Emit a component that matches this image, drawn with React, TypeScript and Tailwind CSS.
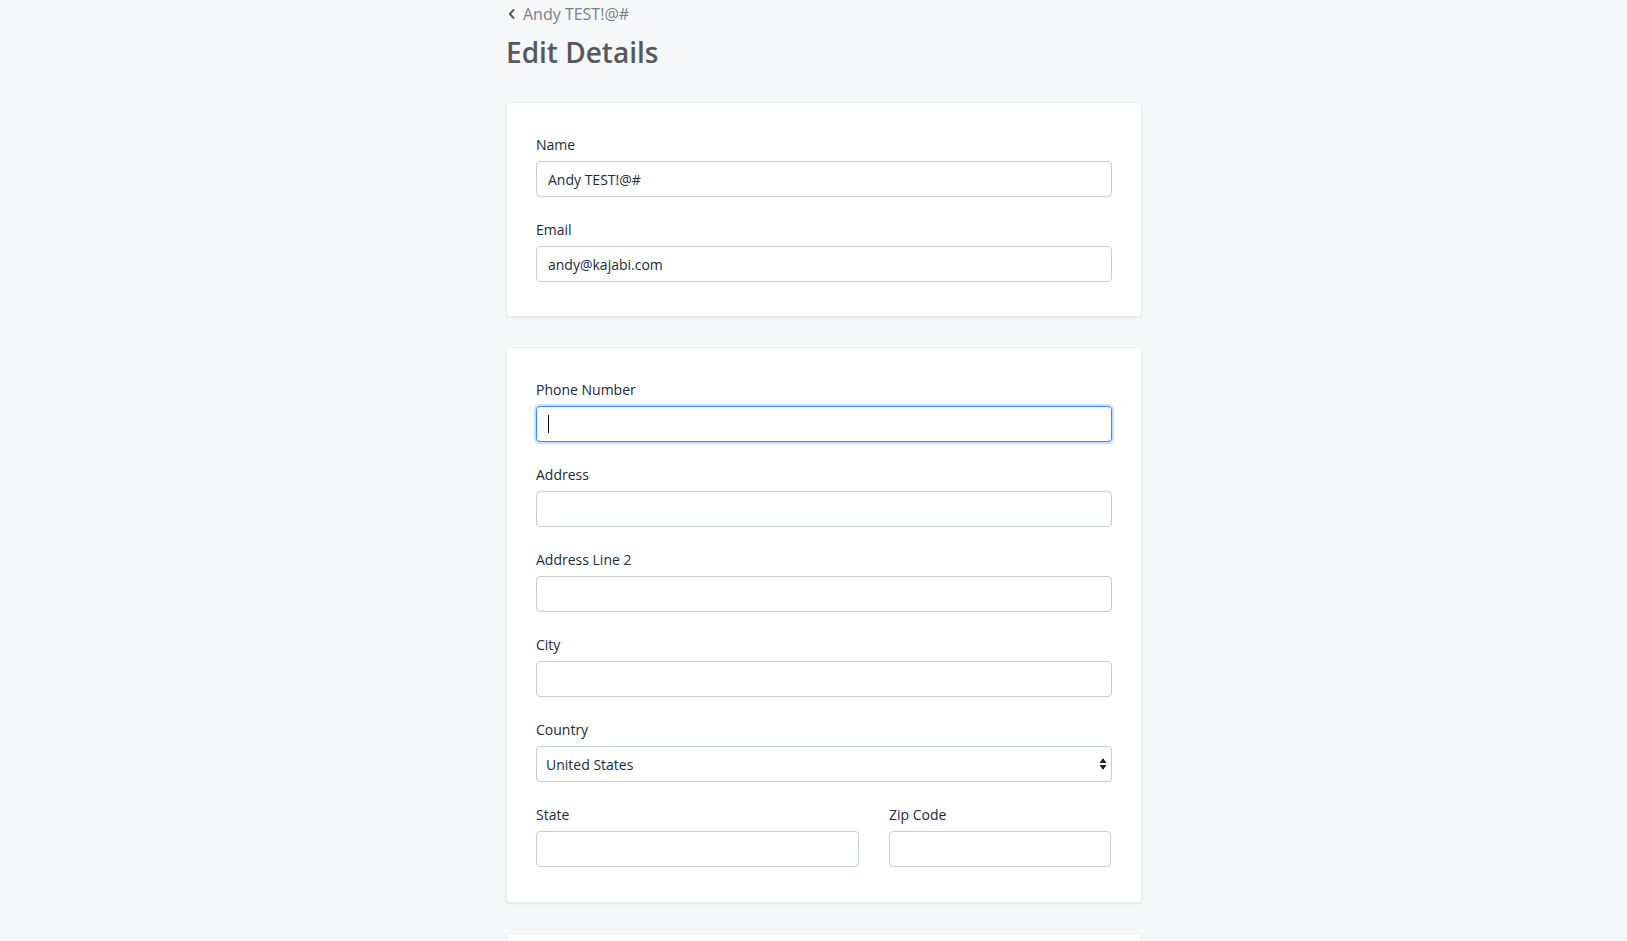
import React from "react";

const font = { fontFamily: '"Open Sans", "Liberation Sans", sans-serif' };

function Field({ label, value, focused }: { label: string; value?: string; focused?: boolean }) {
  return (
    <div className="mb-[23px] last:mb-0">
      <div className="text-[14px] leading-[20px] text-[#212b36] mb-[6px]">{label}</div>
      <div className="relative">
        <input
          readOnly
          value={value ?? ""}
          className={
            "block w-full h-[36px] rounded-[4px] bg-white px-[11px] text-[14px] text-[#212b36] outline-none " +
            (focused
              ? "border border-[#3b8cf5] shadow-[0_0_0_2px_rgba(59,140,245,0.18),0_0_4px_rgba(59,140,245,0.35)]"
              : "border border-[#c4cdd5]")
          }
          style={font}
        />
        {focused && <div className="absolute left-[12px] top-[9px] w-px h-[18px] bg-[#111]" />}
      </div>
    </div>
  );
}

export default function App() {
  return (
    <div className="min-h-screen bg-[#f6f7f9]" style={font}>
      <div className="ml-[506px] w-[636px]">
        <div className="pt-[2px] flex items-center text-[16px] leading-[24px] text-[#7a7f85]">
          <svg width="10" height="12" viewBox="0 0 10 12" className="mr-[6px] ml-[1px]">
            <path d="M6.5 2 L2.8 6 L6.5 10" fill="none" stroke="#555a60" strokeWidth="2" strokeLinecap="round" strokeLinejoin="round" />
          </svg>
          <span>Andy TEST!@#</span>
        </div>
        <h1 className="mt-[8px] text-[28px] leading-[36px] font-semibold text-[#55595e]">Edit Details</h1>

        <div className="mt-[32px] bg-white rounded-[3px] shadow-[0_1px_2px_rgba(0,0,0,0.08)] border border-[#eceef1] px-[29px] pt-[32px] pb-[34px]">
          <Field label="Name" value="Andy TEST!@#" />
          <Field label="Email" value="andy@kajabi.com" />
        </div>

        <div className="mt-[30px] bg-white rounded-[3px] shadow-[0_1px_2px_rgba(0,0,0,0.08)] border border-[#eceef1] px-[29px] pt-[32px] pb-[35px]">
          <Field label="Phone Number" focused />
          <Field label="Address" />
          <Field label="Address Line 2" />
          <Field label="City" />
          <div className="mb-[23px]">
            <div className="text-[14px] leading-[20px] text-[#212b36] mb-[6px]">Country</div>
            <div className="relative h-[36px] rounded-[4px] border border-[#c4cdd5] bg-white flex items-center px-[9px] text-[14px] text-[#212b36]">
              <span>United States</span>
              <svg width="8" height="14" viewBox="0 0 8 14" className="absolute right-[4px] top-[10px]">
                <path d="M4 1 L7.5 6 L0.5 6 Z" fill="#222" />
                <path d="M4 13 L7.5 8 L0.5 8 Z" fill="#222" />
              </svg>
            </div>
          </div>
          <div className="flex gap-[30px]">
            <div className="w-[323px]">
              <div className="text-[14px] leading-[20px] text-[#212b36] mb-[6px]">State</div>
              <input readOnly className="block w-full h-[36px] rounded-[4px] border border-[#c4cdd5] bg-white outline-none" />
            </div>
            <div className="w-[222px]">
              <div className="text-[14px] leading-[20px] text-[#212b36] mb-[6px]">Zip Code</div>
              <input readOnly className="block w-full h-[36px] rounded-[4px] border border-[#c4cdd5] bg-white outline-none" />
            </div>
          </div>
        </div>

        <div className="mt-[30px] bg-white rounded-[3px] border border-[#eceef1] h-[200px]" />
      </div>
    </div>
  );
}
